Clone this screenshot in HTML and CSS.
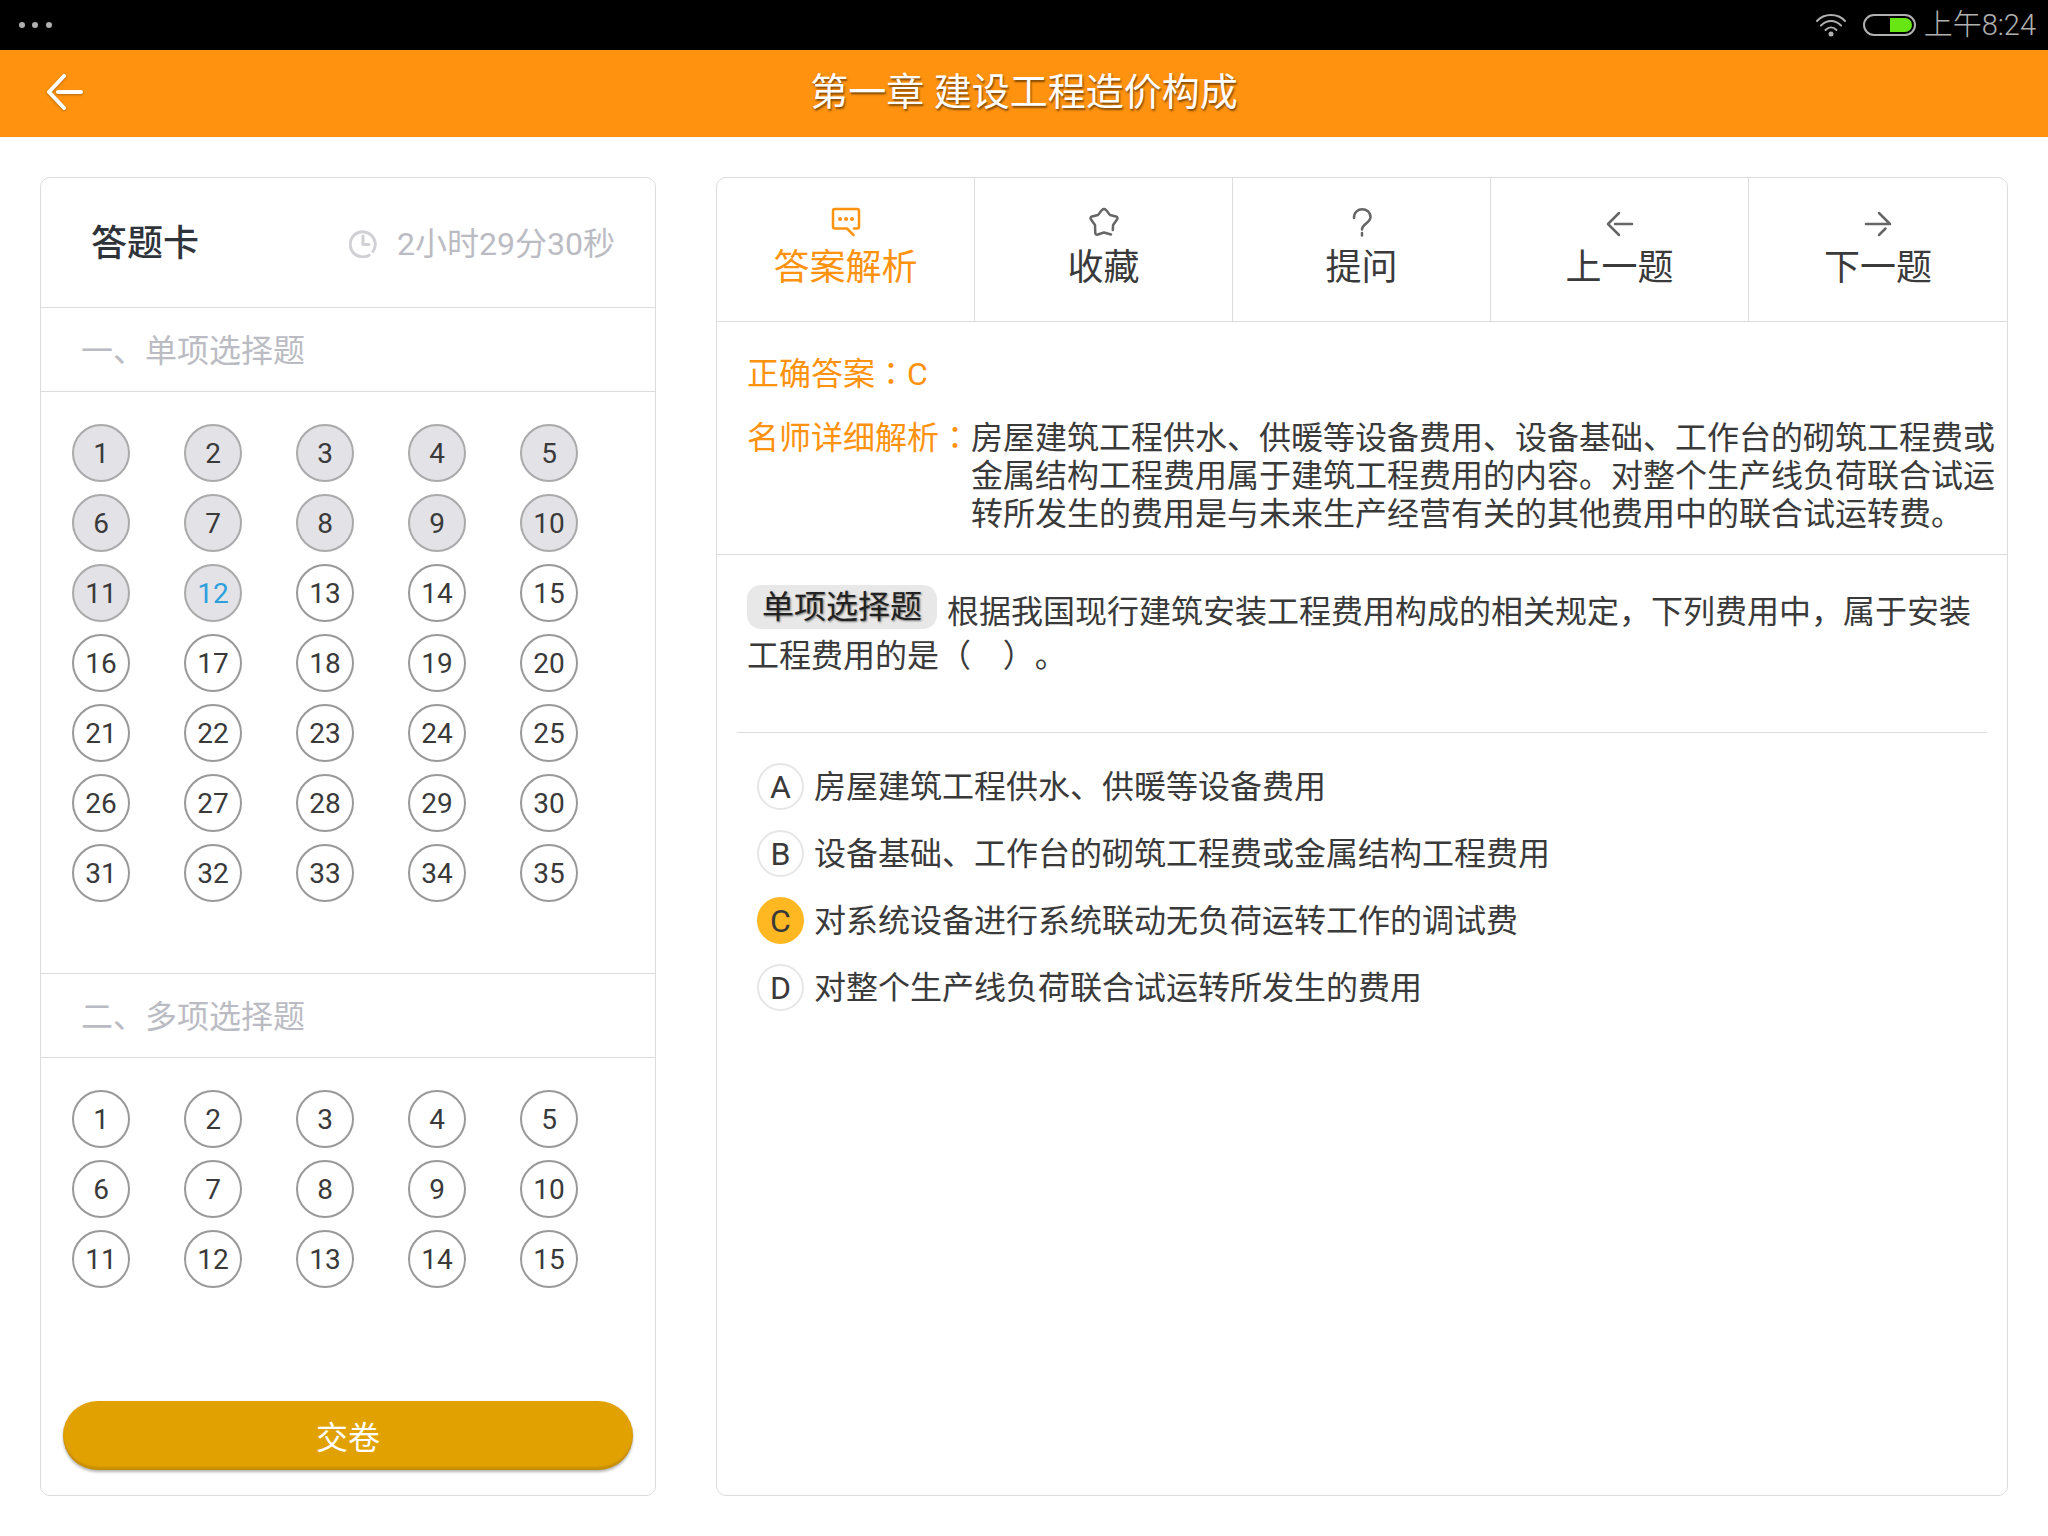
FILE: index.html
```html
<!DOCTYPE html>
<html lang="zh-CN">
<head>
<meta charset="utf-8">
<meta name="viewport" content="width=device-width, initial-scale=1">
<title>第一章 建设工程造价构成</title>
<link rel="stylesheet" href="styles.css">
</head>
<body>
<div class="status-bar">
  <svg class="status-dots" width="36" height="10" viewBox="0 0 36 10" aria-hidden="true"><circle cx="4" cy="5" r="3"/><circle cx="17" cy="5" r="3"/><circle cx="31" cy="5" r="3"/></svg>
  <div class="status-right">
    <svg class="wifi" width="32" height="26" viewBox="0 0 32 26" aria-hidden="true"><path d="M2 9C9 1 23 1 30 9M6 13.500C12 7.500 20 7.500 26 13.500M10.500 18C14 14.500 18 14.500 21.500 18"/><circle cx="16" cy="22" r="2.500"/></svg>
    <svg class="battery" width="53" height="24" viewBox="0 0 53 24" aria-hidden="true"><rect x="1" y="2" width="51" height="20" rx="10"/><path d="M27 5h15a7 7 0 0 1 0 14H27z"/></svg>
    <span>上午8:24</span>
  </div>
</div>

<header class="app-bar">
  <button class="back" type="button" aria-label="返回"><svg width="40" height="40" viewBox="0 0 40 40"><path d="M19 4L4 20l15 16M13 20h23"/></svg></button>
  <h1>第一章 建设工程造价构成</h1>
</header>

<main class="page">
  <aside class="card sheet">
    <div class="sheet-head">
      <h2>答题卡</h2>
      <div class="timer"><svg width="28" height="28" viewBox="0 0 28 28" aria-hidden="true"><path d="M20 25.200A12.500 12.500 0 1 1 24 21.500M14 6v8.500h6"/></svg><span>2小时29分30秒</span></div>
    </div>
    <h3>一、单项选择题</h3>
    <div class="numbers">
      <button class="done">1</button><button class="done">2</button><button class="done">3</button><button class="done">4</button><button class="done">5</button>
      <button class="done">6</button><button class="done">7</button><button class="done">8</button><button class="done">9</button><button class="done">10</button>
      <button class="done">11</button><button class="done current">12</button><button>13</button><button>14</button><button>15</button>
      <button>16</button><button>17</button><button>18</button><button>19</button><button>20</button>
      <button>21</button><button>22</button><button>23</button><button>24</button><button>25</button>
      <button>26</button><button>27</button><button>28</button><button>29</button><button>30</button>
      <button>31</button><button>32</button><button>33</button><button>34</button><button>35</button>
    </div>
    <h3 class="ruled">二、多项选择题</h3>
    <div class="numbers">
      <button>1</button><button>2</button><button>3</button><button>4</button><button>5</button>
      <button>6</button><button>7</button><button>8</button><button>9</button><button>10</button>
      <button>11</button><button>12</button><button>13</button><button>14</button><button>15</button>
    </div>
    <button class="submit" type="button">交卷</button>
  </aside>

  <section class="card question-card">
    <nav class="tabs">
      <button class="active" type="button"><svg width="32" height="32" viewBox="0 0 32 32" aria-hidden="true"><path d="M24 22.500h3a2 2 0 0 0 2-2V5a2 2 0 0 0-2-2H5a2 2 0 0 0-2 2v15.500a2 2 0 0 0 2 2h12l6.500 6.500"/><path class="dots" d="M10 13h.1M16 13h.1M22 13h.1"/></svg>答案解析</button>
      <button type="button"><svg width="32" height="32" viewBox="0 0 32 32" aria-hidden="true"><path d="M24.800 24l.3-5 3.900-5.500c1-1.500.5-2.500-1-3l-6-1.500-4-5c-1.200-1.300-2.800-1.300-4 0l-4 5-6 1.500c-1.500.5-2 1.500-1 3l4 5.500.3 8c0 1.500 1 2 2.500 1.500l6.200-2 7 2"/></svg>收藏</button>
      <button type="button"><svg width="32" height="32" viewBox="0 0 32 32" aria-hidden="true"><path d="M8 12C8 0 24.500 1 24.500 11c0 6-8.500 7-8.500 12.500M16 27v2.500"/></svg>提问</button>
      <button type="button"><svg width="32" height="32" viewBox="0 0 32 32" aria-hidden="true"><path d="M15 7L4 18l11 11M11 18h17"/></svg>上一题</button>
      <button type="button"><svg width="32" height="32" viewBox="0 0 32 32" aria-hidden="true"><path d="M17 7l11 11H4M23.500 22.500L17 29"/></svg>下一题</button>
    </nav>
    <dl class="analysis">
      <div><dt>正确答案<span class="colon" lang="zh-TW">：</span></dt><dd class="answer">C</dd></div>
      <div><dt>名师详细解析<span class="colon" lang="zh-TW">：</span></dt><dd>房屋建筑工程供水、供暖等设备费用、设备基础、工作台的砌筑工程费或金属结构工程费用属于建筑工程费用的内容。对整个生产线负荷联合试运转所发生的费用是与未来生产经营有关的其他费用中的联合试运转费。</dd></div>
    </dl>
    <p class="question"><span class="badge">单项选择题</span>根据我国现行建筑安装工程费用构成的相关规定，下列费用中，属于安装工程费用的是（&nbsp;&nbsp;&nbsp;&nbsp;）。</p>
    <div class="options" role="radiogroup" aria-label="选项">
      <label><input type="radio" name="option"><span class="letter">A</span>房屋建筑工程供水、供暖等设备费用</label>
      <label><input type="radio" name="option"><span class="letter">B</span>设备基础、工作台的砌筑工程费或金属结构工程费用</label>
      <label><input type="radio" name="option" checked><span class="letter">C</span>对系统设备进行系统联动无负荷运转工作的调试费</label>
      <label><input type="radio" name="option"><span class="letter">D</span>对整个生产线负荷联合试运转所发生的费用</label>
    </div>
  </section>
</main>
</body>
</html>
```
FILE: styles.css
```css
:root {
  --orange: #ff920e;
  --line: #dcdcdc;
  --text: #3a3a3a;
  --muted: #bbbcc3;
}

* { box-sizing: border-box; }

body {
  margin: 0;
  min-height: 100vh;
  display: flex;
  flex-direction: column;
  background: #fff;
  color: var(--text);
  font: 32px/38px Roboto, "Noto Sans CJK SC", sans-serif;
  text-spacing-trim: space-all;
}

h1, h2, h3, p, dl, dd { margin: 0; font-weight: 400; }

button {
  padding: 0;
  border: 0;
  background: none;
  color: inherit;
  font: inherit;
}

svg { display: block; fill: none; stroke: currentColor; stroke-linecap: round; stroke-linejoin: round; }

.status-bar {
  height: 50px;
  padding: 0 12px 0 18px;
  display: flex;
  align-items: center;
  justify-content: space-between;
  background: #000;
  color: #b0b0b0;
  font-size: 29px;
  font-weight: 300;
}
.status-dots { fill: currentColor; stroke: none; }
.status-right { display: flex; align-items: center; gap: 8px; }
.wifi { stroke-width: 2; margin-right: 8px; }
.wifi circle { fill: currentColor; stroke: none; }
.battery { stroke-width: 2; }
.battery path { fill: #68e614; stroke: none; }

.app-bar {
  height: 87px;
  padding: 0 45px 3px;
  display: grid;
  grid-template-columns: 1fr auto 1fr;
  align-items: center;
  background: var(--orange);
  color: #fff;
}
.app-bar h1 { font-size: 38px; line-height: 56px; text-shadow: 1px 2px 2px rgba(0, 0, 0, .5); }
.back { justify-self: start; }
.back svg { stroke-width: 4; filter: drop-shadow(0 1px 1px rgba(0, 0, 0, .3)); }

.page {
  flex: 1;
  padding: 40px;
  display: grid;
  grid-template-columns: 616fr 1292fr;
  gap: 60px;
}

.card { border: 1px solid var(--line); border-radius: 10px; }

.sheet { display: flex; flex-direction: column; }
.sheet-head {
  height: 130px;
  padding: 3px 40px 0 50px;
  display: flex;
  align-items: center;
  justify-content: space-between;
  border-bottom: 1px solid var(--line);
}
.sheet-head h2 { font-size: 36px; font-weight: 500; color: #2f333a; }
.timer { display: flex; align-items: center; gap: 20px; color: var(--muted); }
.timer svg { color: #d0d0d5; stroke-width: 3; }
.sheet h3 {
  padding: 24px 40px 21px;
  border-bottom: 1px solid var(--line);
  color: var(--muted);
  font-size: 32px;
}
.sheet .ruled { border-top: 1px solid var(--line); }
.numbers {
  padding: 32px 31px 71px;
  display: grid;
  grid-template-columns: repeat(5, 58px);
  gap: 12px 54px;
}
.numbers button {
  height: 58px;
  padding-top: 2px;
  border: 2px solid #999;
  border-radius: 50%;
  font-size: 28px;
}
.numbers .done { background: #e3e2e7; border-color: #aaa; }
.numbers .current { color: #2ba0dc; }
.submit {
  height: 69px;
  margin: auto 22px 25px;
  padding-top: 4px;
  border-radius: 35px;
  background: #e1a100;
  color: #fff;
  box-shadow: inset 0 -3px 2px rgba(0, 0, 0, .12), 0 2px 3px rgba(0, 0, 0, .3);
}

.tabs {
  display: grid;
  grid-template-columns: repeat(5, 1fr);
  border-bottom: 1px solid var(--line);
}
.tabs button {
  height: 143px;
  padding-bottom: 6px;
  display: flex;
  flex-direction: column;
  align-items: center;
  justify-content: center;
  gap: 11px;
  font-size: 36px;
}
.tabs button:not(:last-child) { border-right: 1px solid var(--line); }
.tabs svg { color: #666; stroke-width: 2.500; }
.tabs .active, .tabs .active svg { color: var(--orange); }
.tabs .dots { stroke-width: 4; }

.analysis {
  padding: 33px 10px 21px 30px;
  display: grid;
  gap: 26px;
  border-bottom: 1px solid var(--line);
}
.analysis div { display: flex; }
.analysis dt { flex: none; }
.analysis dt, .answer { color: var(--orange); }
/* Traditional Chinese punctuation sits in the middle of its cell */
.colon { font-family: Roboto, "Noto Sans CJK TC", sans-serif; }

.question {
  margin: 0 20px;
  padding: 30px 10px 54px;
  border-bottom: 1px solid var(--line);
  line-height: 44px;
}
.badge {
  display: inline-block;
  margin-right: 10px;
  padding: 0 15px;
  border-radius: 14px;
  background: #e8e8e8;
  color: #222;
  vertical-align: 5px;
  text-shadow: 1px 1px 2px rgba(0, 0, 0, .5);
}

.options { padding: 30px 40px; display: grid; gap: 20px; }
.options label { display: flex; align-items: center; gap: 10px; }
.options input { position: absolute; opacity: 0; }
.letter {
  flex: none;
  width: 47px;
  height: 47px;
  display: grid;
  place-items: center;
  border: 2px solid #e6e6e6;
  border-radius: 50%;
}
.options input:checked + .letter { background: #ffb822; border-color: #ffb822; }
```
